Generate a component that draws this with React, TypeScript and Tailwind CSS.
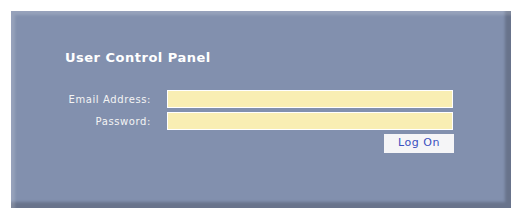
export default function App() {
  return (
    <div className="w-[522px] h-[215px] bg-white p-[11px]" style={{ fontFamily: '"DejaVu Sans", Verdana, sans-serif' }}>
      {/* Panel */}
      <div className="w-[500px] h-[197px] bg-[#8290ae] shadow-[inset_4px_4px_3px_rgba(255,255,255,0.16),inset_-6px_-6px_3px_rgba(0,0,0,0.2)] pt-[38px] pl-[54px]">
        <h1 className="text-[13px] leading-[17px] font-bold tracking-[0.5px] text-white">User Control Panel</h1>

        <div className="mt-[24px] grid grid-cols-[86px_286px] gap-x-[16px] gap-y-[4px] items-center">
          <label className="text-right text-[10px] tracking-[0.6px] text-[#f4f4f4]">Email Address:</label>
          <input type="text" className="h-[18px] border border-white bg-[#f9eeb3] outline-none" />
          <label className="text-right text-[10px] tracking-[0.6px] text-[#f4f4f4]">Password:</label>
          <input type="password" className="h-[18px] border border-white bg-[#f9eeb3] outline-none" />
          <div />
          <div className="flex justify-end">
            <button className="w-[70px] h-[19px] bg-[#f5f5f7] text-[11px] tracking-[0.5px] text-[#3a50c0] -mr-[1px]">Log On</button>
          </div>
        </div>
      </div>
    </div>
  );
}
